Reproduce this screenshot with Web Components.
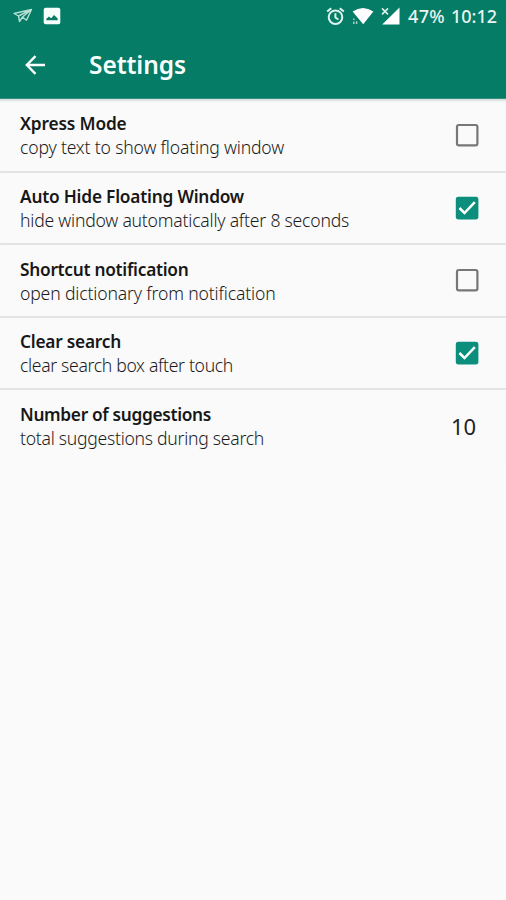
<!DOCTYPE html>
<html lang="en">
<head>
<meta charset="utf-8">
<title>Settings</title>
<style>
html,body{margin:0;height:100%;background:#fafafa}
body{font-family:"Noto Sans","Open Sans",sans-serif;color:#171717;overflow:hidden}
</style>
</head>
<body>
<settings-screen></settings-screen>
<script>
const define = (name, html, init) => customElements.define(name, class extends HTMLElement {
  connectedCallback() {
    if (this.shadowRoot) return;
    this.attachShadow({mode: 'open'}).innerHTML = html;
    if (init) init(this, this.shadowRoot);
  }
});

/* A single line of text tracked so that it spans the given width. */
define('fit-text', `<style>:host{display:block;white-space:nowrap;font-variant-ligatures:none}span{display:inline-block}</style><span><slot></slot></span>`, (el, root) => {
  const s = root.querySelector('span');
  const n = el.textContent.length;
  const w = s.getBoundingClientRect().width;
  s.style.letterSpacing = ((+el.getAttribute('width') - w) / n).toFixed(3) + 'px';
});

define('status-bar', `<style>
:host{display:flex;align-items:center;height:32px;padding:0 9px 0 13px;box-sizing:border-box;color:#e9f5f2;font-size:18px;font-weight:500;line-height:32px}
svg{display:block;flex:none}
.gap{flex:1}
</style>
<svg width="20" height="16" viewBox="0 0 20 16" fill="none" stroke="#b5ded4" stroke-width="1.4" stroke-linejoin="round"><path d="M1 5.5 18.5 1.5 13.5 12.2 9.5 9 6.5 13.5 5.5 8Z M5.5 8 18.5 1.5 9.5 9"/></svg>
<svg style="margin-left:10px" width="18" height="18" viewBox="0 0 18 18"><rect x=".7" y=".7" width="16.6" height="16.6" rx="2" fill="#f7fffd"/><path d="M3.3 13.2V11.8L6 9.5 8.2 11.2 11 8 14.7 11.5V13.2Z" fill="#087c65"/></svg>
<span class="gap"></span>
<svg width="19" height="19" viewBox="0 0 19 19" fill="none" stroke="#e0f2ed" stroke-width="2"><circle cx="9.5" cy="10.2" r="6.8"/><path d="M9.4 6.3V10.5L12.4 12.5M1.2 4.6 5.2 1.2M17.8 4.6 13.8 1.2"/></svg>
<svg style="margin-left:7px" width="22" height="18" viewBox="0 0 22 18"><path d="M.6 4.6Q11-2.8 21.4 4.6L11.2 17.3Z" fill="#fff"/><path d="M1.8 11.5v1.6M1.8 14.6v2.4M4.6 14.3v2.7" stroke="#a3d0c6" stroke-width="1.5"/></svg>
<svg style="margin-left:7px" width="19" height="18" viewBox="0 0 19 18"><path d="M18.5.5V17.5H1.2Z" fill="#fff"/><path d="M1 1.4 7 7.4M7 1.4 1 7.4" stroke="#e0f2ed" stroke-width="1.5"/></svg>
<fit-text width="37" style="margin-left:8px">47%</fit-text>
<fit-text width="46" style="margin-left:6px">10:12</fit-text>`);

define('app-bar', `<style>
:host{display:flex;align-items:center;height:66px;padding:0 25px;color:#f8fffd;font-size:24.5px;font-weight:600;line-height:66px}
svg{display:block;margin-right:43px}
</style>
<svg width="21" height="20" viewBox="0 0 21 20" fill="none" stroke="#f8fffd" stroke-width="2.4"><path d="M20 10H2.5M10.5 1.2 1.8 10 10.5 18.8"/></svg>
<fit-text width="97"><slot></slot></fit-text>`, (el, root) => {
  const t = root.querySelector('fit-text');
  const line = document.createElement('fit-text');
  line.setAttribute('width', '97');
  line.textContent = el.textContent;
  t.replaceWith(line);
});

define('check-box', `<style>:host{display:block;width:24px;height:24px}svg{display:block}.tick,.fill{display:none}:host([checked]) .tick,:host([checked]) .fill{display:block}:host([checked]) .edge{display:none}</style>
<svg width="24" height="24" viewBox="0 0 24 24"><rect class="edge" x="2" y="2" width="20.4" height="20.4" rx="1.8" fill="none" stroke="#777" stroke-width="2.2"/><rect class="fill" x=".8" y=".8" width="22.6" height="22.6" rx="2.6" fill="#0b8f7c"/><path class="tick" d="M4.4 12 9.5 17 19.8 6.2" fill="none" stroke="#fff" stroke-width="2.5"/></svg>`);

define('setting-row', `<style>
:host{display:flex;justify-content:space-between;box-sizing:border-box;height:72.65px;padding:0 27px 0 20px;border-bottom:2px solid #e4e4e4}
:host(:last-of-type){border-bottom:0}
.text{padding-top:12.6px}
.title{font-size:17.3px;font-weight:600;line-height:24px;height:23px}
.sub{font-size:17.6px;font-weight:300;line-height:24px;color:#1c1c1c}
.end{padding-top:23.2px}
</style>
<div class="text"><div class="title"><slot name="title"></slot></div><div class="sub"><slot name="sub"></slot></div></div><div class="end"><slot></slot></div>`);

define('number-value', `<style>:host{display:block;font-size:22px;font-weight:400;line-height:24px;padding-right:3px;color:#222}</style><fit-text width="25">10</fit-text>`);

define('settings-screen', `<style>
:host{display:block;width:506px;height:900px;background:#fafafa}
header{background:#047c66;border-bottom:1px solid #388f7f}
main{padding-top:.9px;box-shadow:inset 0 3px 2px -1px #d5dfdc}
</style>
<header><status-bar></status-bar><app-bar>Settings</app-bar></header>
<main>
<setting-row><fit-text slot="title" width="106.5">Xpress Mode</fit-text><fit-text slot="sub" width="264">copy text to show floating window</fit-text><check-box></check-box></setting-row>
<setting-row><fit-text slot="title" width="224">Auto Hide Floating Window</fit-text><fit-text slot="sub" width="329">hide window automatically after 8 seconds</fit-text><check-box checked></check-box></setting-row>
<setting-row><fit-text slot="title" width="168.5">Shortcut notification</fit-text><fit-text slot="sub" width="255.5">open dictionary from notification</fit-text><check-box></check-box></setting-row>
<setting-row><fit-text slot="title" width="101">Clear search</fit-text><fit-text slot="sub" width="213">clear search box after touch</fit-text><check-box checked></check-box></setting-row>
<setting-row><fit-text slot="title" width="191">Number of suggestions</fit-text><fit-text slot="sub" width="244">total suggestions during search</fit-text><number-value></number-value></setting-row>
</main>`);
</script>
</body>
</html>
